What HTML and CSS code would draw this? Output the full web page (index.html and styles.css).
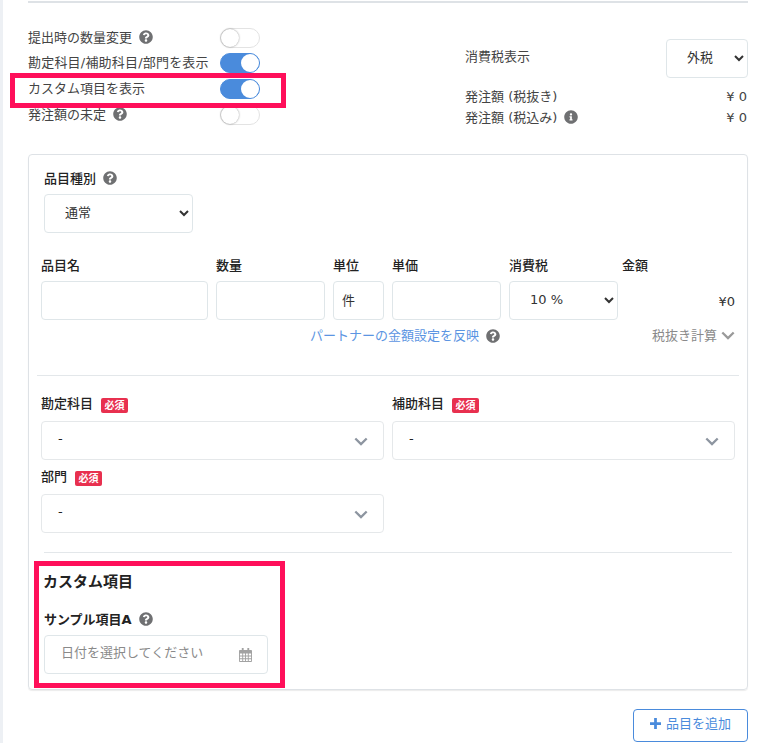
FILE: index.html
```html
<!DOCTYPE html>
<html lang="ja">
<head>
<meta charset="utf-8">
<title>発注明細</title>
<link rel="stylesheet" href="styles.css">
</head>
<body>
<svg class="defs" width="0" height="0" aria-hidden="true">
  <symbol id="q" viewBox="0 0 512 512"><path d="M504 256c0 136.997-111.043 248-248 248S8 392.997 8 256C8 119.083 119.043 8 256 8s248 111.083 248 248zM262.655 90c-54.497 0-89.255 22.957-116.549 63.758-3.536 5.286-2.353 12.415 2.715 16.258l34.699 26.31c5.205 3.947 12.621 3.008 16.665-2.122 17.864-22.658 30.113-35.797 57.303-35.797 20.429 0 45.698 13.148 45.698 32.958 0 14.976-12.363 22.667-32.534 33.976C247.128 238.528 216 254.941 216 296v4c0 6.627 5.373 12 12 12h56c6.627 0 12-5.373 12-12v-1.333c0-28.462 83.186-29.647 83.186-106.667 0-58.002-60.165-102-116.531-102zM256 338c-25.365 0-46 20.635-46 46 0 25.364 20.635 46 46 46s46-20.636 46-46c0-25.365-20.635-46-46-46z"/></symbol>
  <symbol id="i" viewBox="0 0 512 512"><path d="M256 8C119.043 8 8 119.083 8 256c0 136.997 111.043 248 248 248s248-111.003 248-248C504 119.083 392.957 8 256 8zm0 110c23.196 0 42 18.804 42 42s-18.804 42-42 42-42-18.804-42-42 18.804-42 42-42zm56 254c0 6.627-5.373 12-12 12h-88c-6.627 0-12-5.373-12-12v-24c0-6.627 5.373-12 12-12h12v-64h-12c-6.627 0-12-5.373-12-12v-24c0-6.627 5.373-12 12-12h64c6.627 0 12 5.373 12 12v100h12c6.627 0 12 5.373 12 12v24z"/></symbol>
  <symbol id="chev" viewBox="0 0 16 10"><path d="M1.500 1.500 8 8l6.500-6.500" fill="none" stroke="currentColor" stroke-width="2.600"/></symbol>
</svg>
<main class="page">
  <section class="top">
    <div class="switches">
      <div class="switch-row"><span class="switch-label">提出時の数量変更<svg class="help"><use href="#q"/></svg></span><span class="toggle"></span></div>
      <div class="switch-row"><span class="switch-label wide-label">勘定科目/補助科目/部門を表示</span><span class="toggle on"></span></div>
      <div class="switch-row"><span class="switch-label">カスタム項目を表示</span><span class="toggle on"></span></div>
      <div class="switch-row"><span class="switch-label">発注額の未定<svg class="help"><use href="#q"/></svg></span><span class="toggle"></span></div>
    </div>
    <div class="totals">
      <div class="tax-row"><span class="tax-label">消費税表示</span><select class="control tax-select"><option>外税</option></select></div>
      <div class="total-row first"><span>発注額 (税抜き)</span><span>¥ 0</span></div>
      <div class="total-row"><span>発注額 (税込み)<svg class="help"><use href="#i"/></svg></span><span>¥ 0</span></div>
    </div>
  </section>

  <section class="card">
    <div class="kind">
      <div class="field-label">品目種別<svg class="help"><use href="#q"/></svg></div>
      <select class="control kind-select"><option>通常</option></select>
    </div>

    <div class="item-grid">
      <div class="col col-name"><div class="field-label">品目名</div><input class="control" type="text"></div>
      <div class="col col-qty"><div class="field-label">数量</div><input class="control" type="text"></div>
      <div class="col col-unit"><div class="field-label">単位</div><input class="control" type="text" value="件"></div>
      <div class="col col-qty"><div class="field-label">単価</div><input class="control" type="text"></div>
      <div class="col col-qty"><div class="field-label">消費税</div><select class="control tax-rate"><option>10 %</option></select></div>
      <div class="col col-amount"><div class="field-label">金額</div><div class="amount">¥0</div></div>
    </div>

    <div class="item-links">
      <a class="link">パートナーの金額設定を反映</a><svg class="help"><use href="#q"/></svg>
      <span class="calc">税抜き計算<svg class="calc-chev"><use href="#chev"/></svg></span>
    </div>

    <hr class="rule rule-wide">

    <div class="accounts">
      <div class="account">
        <div class="field-label">勘定科目<span class="req">必須</span></div>
        <div class="fake-select"><span>-</span><svg class="chev"><use href="#chev"/></svg></div>
      </div>
      <div class="account">
        <div class="field-label">補助科目<span class="req">必須</span></div>
        <div class="fake-select"><span>-</span><svg class="chev"><use href="#chev"/></svg></div>
      </div>
      <div class="account">
        <div class="field-label">部門<span class="req">必須</span></div>
        <div class="fake-select"><span>-</span><svg class="chev"><use href="#chev"/></svg></div>
      </div>
    </div>

    <hr class="rule rule-narrow">

    <div class="custom">
      <h2 class="custom-title">カスタム項目</h2>
      <div class="field-label sample-label">サンプル項目A<svg class="help"><use href="#q"/></svg></div>
      <div class="date-input">
        <span>日付を選択してください</span>
        <svg class="cal" viewBox="0 0 14 15"><path fill-rule="evenodd" d="M3 0h2v2h4V0h2v2h2a1 1 0 0 1 1 1v11a1 1 0 0 1-1 1H1a1 1 0 0 1-1-1V3a1 1 0 0 1 1-1h2V0zM1 6v2h2.500V6H1zm3.500 0v2h2V6h-2zm3 0v2h2V6h-2zm3 0v2H13V6h-2.500zM1 9v2h2.500V9H1zm3.500 0v2h2V9h-2zm3 0v2h2V9h-2zm3 0v2H13V9h-2.500zM1 12v2h2.500v-2H1zm3.500 0v2h2v-2h-2zm3 0v2h2v-2h-2zm3 0v2H13v-2h-2.500z"/></svg>
      </div>
    </div>
  </section>

  <div class="actions">
    <button class="add-btn" type="button"><svg class="plus" viewBox="0 0 12 12"><path d="M4.500 0h3v4.500H12v3H7.500V12h-3V7.500H0v-3h4.500z"/></svg>品目を追加</button>
  </div>

  <div class="mark mark-switch"></div>
  <div class="mark mark-custom"></div>
</main>
</body>
</html>
```
FILE: styles.css
```css
* { box-sizing: border-box; }
html, body { margin: 0; height: 743px; overflow: hidden; background: #fff; }
body {
  font-family: "DejaVu Sans", "Noto Sans CJK JP", sans-serif;
  font-size: 13px;
  line-height: 20px;
  color: #333;
}
.defs { position: absolute; }
.page {
  position: relative;
  width: 772px;
  height: 743px;
  border-left: 3px solid #edf0f4;
  padding: 1px 24px 0 25px;
}
.help { width: 14px; height: 14px; fill: #6f7072; margin-left: 7px; vertical-align: -2px; }

.top {
  display: flex;
  height: 153px;
  border-top: 2px solid #dee2e6;
}
.switches {
  width: 437px;
  padding-top: 24.800px;
  display: flex;
  flex-direction: column;
  gap: 5.600px;
}
.switch-row { display: flex; align-items: center; height: 20px; }
.switch-label { width: 192px; white-space: nowrap; color: #444; }
.wide-label { letter-spacing: .2px; }
.toggle {
  position: relative;
  width: 40px;
  height: 20px;
  border-radius: 10px;
  background: #fff;
  border: 1px solid #e3e3e3;
}
.toggle::after {
  content: "";
  position: absolute;
  left: 0;
  top: 0;
  width: 18px;
  height: 18px;
  border-radius: 50%;
  background: #fff;
  box-shadow: 0 0 2px rgba(0, 0, 0, .45);
}
.toggle.on { background: #4a8bdc; border-color: #4a8bdc; }
.toggle.on::after { left: 20px; box-shadow: none; }

.totals { width: 283px; padding-top: 36px; color: #444; }
.tax-row, .total-row { display: flex; justify-content: space-between; align-items: center; }
.tax-label { padding-bottom: 4px; }
.total-row { height: 21px; padding: 0 1px 0 0; }
.total-row.first { margin-top: 8px; }

.control {
  display: block;
  height: 39px;
  border: 1px solid #dfe6e9;
  border-radius: 4px;
  background: #fff;
  font: inherit;
  color: #333;
  outline: none;
}
select.control { padding: 0 0 3px 16px; }
.tax-select { width: 82px; }
.kind-select { width: 149px; margin-top: 6px; }
input.control { width: 100%; padding: 0 8px 2px; }
select.tax-rate { width: 100%; }

.card {
  height: 536px;
  border: 1px solid #dee2e6;
  border-radius: 4px;
  box-shadow: 0 1px 1px rgba(0, 0, 0, .08);
  padding-top: 13px;
}
.field-label { height: 20px; padding-top: 1px; color: #222; font-weight: 500; white-space: nowrap; }
.kind { padding-left: 15px; }

.item-grid { display: flex; gap: 8px; margin: 22px 12px 0; }
.col-name { width: 167px; }
.col-qty { width: 109px; }
.col-unit { width: 51px; }
.col-amount { width: 113px; margin-left: -4px; }
.col .field-label { margin-bottom: 6px; }
.amount { text-align: right; height: 39px; line-height: 41px; color: #333; }

.item-links {
  display: flex;
  align-items: center;
  justify-content: flex-start;
  height: 20px;
  margin: 5px 12px 0;
  padding: 2px 0 0 269px;
}
.link { color: #5c95e2; }
.calc { margin-left: auto; color: #8a8a8a; white-space: nowrap; }
.calc-chev { width: 14px; height: 9px; color: #9a9a9a; margin-left: 4px; }

.rule { border: 0; border-top: 1px solid #e3e7ea; margin: 0; }
.rule-wide { margin: 30px 8px 0; }
.rule-narrow { margin: 19px 15px 0; }

.accounts {
  display: grid;
  grid-template-columns: 343px 343px;
  column-gap: 8px;
  row-gap: 6px;
  margin: 17px 12px 0;
}
.account .fake-select { margin-top: 8px; }
.req {
  display: inline-block;
  width: 27px;
  height: 15px;
  margin-left: 8px;
  border-radius: 2px;
  background: #e8304f;
  color: #fff;
  font-size: 10px;
  font-weight: 700;
  line-height: 15px;
  text-align: center;
  vertical-align: -1px;
}
.fake-select {
  display: flex;
  align-items: center;
  justify-content: space-between;
  height: 39px;
  padding: 0 16px 3px;
  border: 1px solid #e5e8ea;
  border-radius: 4px;
  background: #fff;
  color: #222;
}
.chev { width: 14px; height: 9px; color: #8d95a0; margin: 5px -1px 0 0; }

.custom { padding: 16px 15px 0 14px; }
.custom-title { margin: 0; padding-top: 1px; font-size: 15px; line-height: 24px; height: 24px; font-weight: 700; color: #222; }
.sample-label { margin: 16px 0 0 1px; font-weight: 700; }
.date-input {
  display: flex;
  align-items: center;
  justify-content: space-between;
  width: 224px;
  height: 39px;
  margin: 6px 0 0 1px;
  padding: 0 16px 3px;
  border: 1px solid #dfe6e9;
  border-radius: 4px;
  color: #8a8a8a;
}
.cal { width: 13px; height: 14px; fill: #a2a2a2; margin: 3px -1px 0 0; }

.actions { display: flex; justify-content: flex-end; margin-top: 19px; }
.add-btn {
  display: flex;
  align-items: center;
  justify-content: center;
  width: 115px;
  height: 33px;
  padding: 0 0 4px;
  border: 1px solid #4a8bdc;
  border-radius: 4px;
  background: #fff;
  color: #4a8bdc;
  font: inherit;
}
.plus { width: 11px; height: 11px; fill: #4a8bdc; margin-right: 5px; }

.mark { position: absolute; border: 5px solid #ff0f5a; pointer-events: none; }
.mark-switch { left: 7px; top: 73px; width: 276px; height: 35px; }
.mark-custom { left: 31px; top: 561px; width: 251px; height: 127px; }
```
